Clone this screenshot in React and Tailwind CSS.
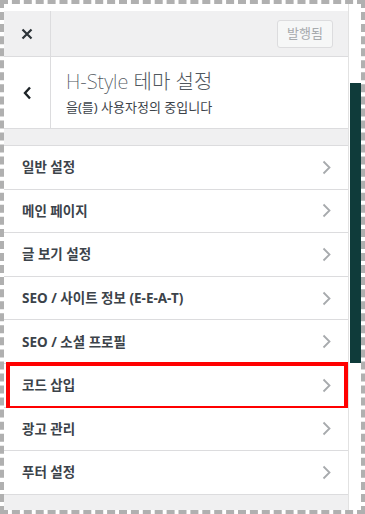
import React from 'react'

const font = { fontFamily: '"Noto Sans", "Noto Sans CJK KR", sans-serif' }

const items = [
  '일반 설정',
  '메인 페이지',
  '글 보기 설정',
  'SEO / 사이트 정보 (E-E-A-T)',
  'SEO / 소셜 프로필',
  '코드 삽입',
  '광고 관리',
  '푸터 설정',
]

function Chevron() {
  return (
    <svg width="9" height="15" viewBox="0 0 9 15" fill="none">
      <path d="M1.5 1.5 L7.5 7.5 L1.5 13.5" stroke="#a7aaad" strokeWidth="1.8" />
    </svg>
  )
}

export default function App() {
  return (
    <div
      className="w-[365px] h-[514px] border-4 border-dashed border-[#b0b0b0] bg-white flex overflow-hidden"
      style={font}
    >
      {/* customizer panel */}
      <div className="w-[345px] flex flex-col border-r border-[#e2e2e2]">
        <div className="h-[7px] bg-white" />

        {/* top bar */}
        <div className="h-[46px] bg-[#f0f0f1] border-b border-[#dcdcde] flex items-stretch">
          <div className="w-[47px] border-r border-[#dcdcde] flex items-center justify-center">
            <svg width="12" height="12" viewBox="0 0 12 12">
              <path d="M1.5 1.5 L10.5 10.5 M10.5 1.5 L1.5 10.5" stroke="#2c3338" strokeWidth="2.2" />
            </svg>
          </div>
          <div className="flex-1 flex items-center justify-end pr-[15px]">
            <div className="h-[28px] w-[56px] border border-[#dcdcde] bg-[#f6f7f7] rounded-[3px] flex items-center justify-center text-[13px] text-[#a7aaad]">
              발행됨
            </div>
          </div>
        </div>

        {/* section title */}
        <div className="h-[72px] bg-white border-b border-[#dcdcde] flex items-stretch">
          <div className="w-[47px] border-r border-[#dcdcde] flex items-center justify-center">
            <svg width="9" height="14" viewBox="0 0 9 14">
              <path d="M7 1.5 L2 7 L7 12.5" stroke="#1d2327" strokeWidth="2.4" fill="none" />
            </svg>
          </div>
          <div className="flex-1 pl-[15px] flex flex-col justify-center">
            <div className="text-[20px] leading-[24px] font-extralight text-[#50575e]">H-Style 테마 설정</div>
            <div className="text-[13px] leading-[18px] text-[#3c434a] mt-[4px]">을(를) 사용자정의 중입니다</div>
          </div>
        </div>

        {/* section list */}
        <div className="flex-1 bg-[#f0f0f1] pt-[16px]">
          <div className="border-t border-[#dcdcde]">
            {items.map((label) => (
              <div
                key={label}
                className="relative h-[43.6px] bg-white border-b border-[#dcdcde] flex items-center justify-between pl-[18px] pr-[17px]"
              >
                <span className="text-[13.5px] font-bold text-[#3c434a]">{label}</span>
                <Chevron />
                {label === '코드 삽입' && (
                  <div className="absolute left-[2px] right-0 -top-[2px] -bottom-[3px] border-4 border-[#ff0000]" />
                )}
              </div>
            ))}
          </div>
        </div>
      </div>

      {/* scrollbar */}
      <div className="flex-1 bg-white">
        <div className="mt-[79px] ml-[1px] h-[280px] bg-[#0f3b3a]" />
      </div>
    </div>
  )
}
